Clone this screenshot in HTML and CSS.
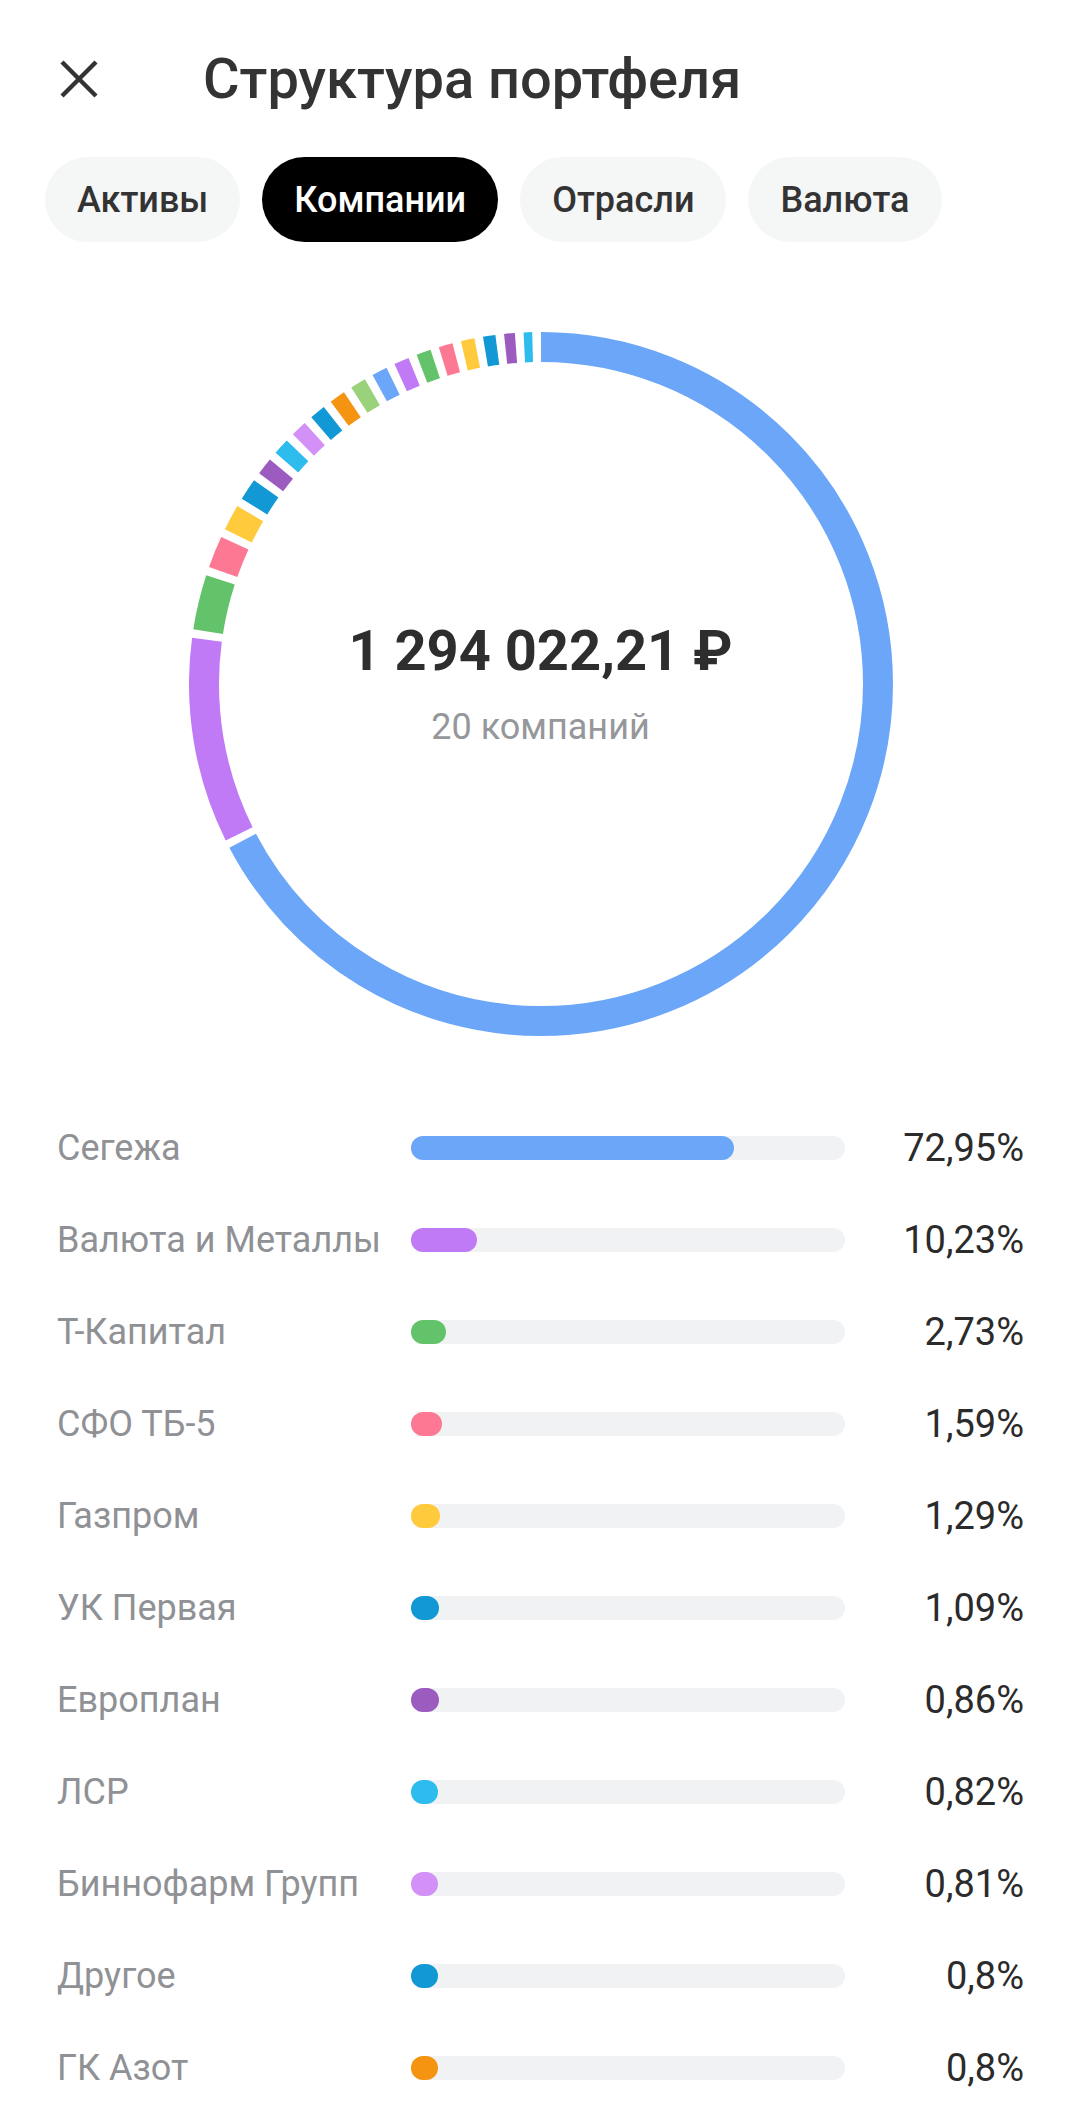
FILE: index.html
```html
<!DOCTYPE html>
<html lang="ru">
<head>
    <meta charset="UTF-8">
    <meta name="viewport" content="width=device-width, initial-scale=1.0">
    <title>Структура портфеля</title>
    <link rel="stylesheet" href="styles.css">
</head>
<body>

    <div class="page">
        <div class="header">
            <button class="close-btn" aria-label="Закрыть">
                <svg viewBox="0 0 40 40" width="40" height="40">
                    <line x1="3" y1="3" x2="37" y2="37" />
                    <line x1="37" y1="3" x2="3" y2="37" />
                </svg>
            </button>
            <h1>Структура портфеля</h1>
        </div>

        <div class="tabs">
            <div class="tab">Активы</div>
            <div class="tab active">Компании</div>
            <div class="tab">Отрасли</div>
            <div class="tab">Валюта</div>
        </div>

        <!-- Donut: circle r=337, circumference 2117.43 -->
        <div class="donut">
            <svg viewBox="0 0 704 704" width="704" height="704">
                <g fill="none" stroke-width="30">
                    <circle cx="352" cy="352" r="337" stroke="#6ca6f8" stroke-dasharray="1424.5 2117.43" transform="rotate(-90 352 352)" />
                    <circle cx="352" cy="352" r="337" stroke="#c07af6" stroke-dasharray="199.75 2117.43" transform="rotate(153.59 352 352)" />
                    <circle cx="352" cy="352" r="337" stroke="#63c36b" stroke-dasharray="53.29 2117.43" transform="rotate(188.95 352 352)" />
                    <circle cx="352" cy="352" r="337" stroke="#fd7893" stroke-dasharray="31.06 2117.43" transform="rotate(199.41 352 352)" />
                    <circle cx="352" cy="352" r="337" stroke="#ffca3b" stroke-dasharray="25.17 2117.43" transform="rotate(206.09 352 352)" />
                    <circle cx="352" cy="352" r="337" stroke="#1298d4" stroke-dasharray="21.29 2117.43" transform="rotate(211.77 352 352)" />
                    <circle cx="352" cy="352" r="337" stroke="#9c5bbf" stroke-dasharray="16.82 2117.43" transform="rotate(216.79 352 352)" />
                    <circle cx="352" cy="352" r="337" stroke="#2ebcef" stroke-dasharray="16.00 2117.43" transform="rotate(221.05 352 352)" />
                    <circle cx="352" cy="352" r="337" stroke="#d390f6" stroke-dasharray="15.82 2117.43" transform="rotate(225.17 352 352)" />
                    <circle cx="352" cy="352" r="337" stroke="#1298d4" stroke-dasharray="15.65 2117.43" transform="rotate(229.26 352 352)" />
                    <circle cx="352" cy="352" r="337" stroke="#f59410" stroke-dasharray="15.65 2117.43" transform="rotate(233.32 352 352)" />
                    <circle cx="352" cy="352" r="337" stroke="#9ad27b" stroke-dasharray="15.41 2117.43" transform="rotate(237.38 352 352)" />
                    <circle cx="352" cy="352" r="337" stroke="#6ca6f8" stroke-dasharray="15.23 2117.43" transform="rotate(241.40 352 352)" />
                    <circle cx="352" cy="352" r="337" stroke="#c07af6" stroke-dasharray="14.82 2117.43" transform="rotate(245.39 352 352)" />
                    <circle cx="352" cy="352" r="337" stroke="#63c36b" stroke-dasharray="14.23 2117.43" transform="rotate(249.31 352 352)" />
                    <circle cx="352" cy="352" r="337" stroke="#fd7893" stroke-dasharray="13.65 2117.43" transform="rotate(253.13 352 352)" />
                    <circle cx="352" cy="352" r="337" stroke="#ffca3b" stroke-dasharray="13.29 2117.43" transform="rotate(256.85 352 352)" />
                    <circle cx="352" cy="352" r="337" stroke="#1298d4" stroke-dasharray="12.12 2117.43" transform="rotate(260.51 352 352)" />
                    <circle cx="352" cy="352" r="337" stroke="#9c5bbf" stroke-dasharray="10.53 2117.43" transform="rotate(263.97 352 352)" />
                    <circle cx="352" cy="352" r="337" stroke="#2ebcef" stroke-dasharray="8.41 2117.43" transform="rotate(267.16 352 352)" />
                </g>
            </svg>
            <div class="donut-center">
                <div class="total">1 294 022,21 ₽</div>
                <div class="count">20 компаний</div>
            </div>
        </div>

        <div class="list">
            <div class="row">
                <span class="name">Сегежа</span>
                <div class="track"><div class="fill blue" style="width: calc(24px + (100% - 24px) * 0.7295)"></div></div>
                <span class="pct">72,95%</span>
            </div>
            <div class="row">
                <span class="name">Валюта и Металлы</span>
                <div class="track"><div class="fill violet" style="width: calc(24px + (100% - 24px) * 0.1023)"></div></div>
                <span class="pct">10,23%</span>
            </div>
            <div class="row">
                <span class="name">Т-Капитал</span>
                <div class="track"><div class="fill green" style="width: calc(24px + (100% - 24px) * 0.0273)"></div></div>
                <span class="pct">2,73%</span>
            </div>
            <div class="row">
                <span class="name">СФО ТБ-5</span>
                <div class="track"><div class="fill pink" style="width: calc(24px + (100% - 24px) * 0.0159)"></div></div>
                <span class="pct">1,59%</span>
            </div>
            <div class="row">
                <span class="name">Газпром</span>
                <div class="track"><div class="fill yellow" style="width: calc(24px + (100% - 24px) * 0.0129)"></div></div>
                <span class="pct">1,29%</span>
            </div>
            <div class="row">
                <span class="name">УК Первая</span>
                <div class="track"><div class="fill darkblue" style="width: calc(24px + (100% - 24px) * 0.0109)"></div></div>
                <span class="pct">1,09%</span>
            </div>
            <div class="row">
                <span class="name">Европлан</span>
                <div class="track"><div class="fill purple" style="width: calc(24px + (100% - 24px) * 0.0086)"></div></div>
                <span class="pct">0,86%</span>
            </div>
            <div class="row">
                <span class="name">ЛСР</span>
                <div class="track"><div class="fill cyan" style="width: calc(24px + (100% - 24px) * 0.0082)"></div></div>
                <span class="pct">0,82%</span>
            </div>
            <div class="row">
                <span class="name">Биннофарм Групп</span>
                <div class="track"><div class="fill lilac" style="width: calc(24px + (100% - 24px) * 0.0081)"></div></div>
                <span class="pct">0,81%</span>
            </div>
            <div class="row">
                <span class="name">Другое</span>
                <div class="track"><div class="fill darkblue" style="width: calc(24px + (100% - 24px) * 0.008)"></div></div>
                <span class="pct">0,8%</span>
            </div>
            <div class="row">
                <span class="name">ГК Азот</span>
                <div class="track"><div class="fill orange" style="width: calc(24px + (100% - 24px) * 0.008)"></div></div>
                <span class="pct">0,8%</span>
            </div>
        </div>
    </div>

</body>
</html>
```

FILE: styles.css
```css
body {
    margin: 0;
    background: #ffffff;
    font-family: Roboto, "Noto Sans", sans-serif;
    color: #333333;
}
.page {
    padding: 0 56px 0 57px;
}

/* header */
.header {
    display: flex;
    align-items: center;
    height: 78px;
    margin-top: 40px;
}
.close-btn {
    width: 40px;
    height: 40px;
    padding: 0;
    margin-left: 2px;
    border: none;
    background: none;
}
.close-btn svg { display: block; }
.close-btn line { stroke: #333333; stroke-width: 4.5; }
h1 {
    margin: 0 0 0 104px;
    font-size: 56px;
    font-weight: 500;
    color: #333333;
}

/* tabs */
.tabs {
    display: flex;
    gap: 22px;
    margin-top: 39px;
    margin-left: -12px;
}
.tab {
    height: 85px;
    padding: 0 32px;
    border-radius: 43px;
    background: #f5f6f6;
    display: flex;
    align-items: center;
    font-size: 36px;
    font-weight: 500;
    color: #333333;
}
.tab.active { background: #000000; color: #ffffff; }

/* donut */
.donut {
    position: relative;
    width: 704px;
    height: 704px;
    margin: 90px auto 0;
}
.donut svg { display: block; }
.donut-center {
    position: absolute;
    inset: 0;
    display: flex;
    flex-direction: column;
    align-items: center;
    justify-content: center;
}
.total {
    font-size: 56px;
    font-weight: 700;
    line-height: 1;
    color: #2e2e2e;
}
.count {
    margin-top: 30px;
    font-size: 36px;
    line-height: 1;
    color: #95979b;
}

/* list */
.list { margin-top: 66px; }
.row {
    display: grid;
    grid-template-columns: 354px 434px 1fr;
    align-items: center;
    height: 92px;
}
.name {
    font-size: 36px;
    color: #8f9195;
}
.pct {
    text-align: right;
    font-size: 38px;
    color: #2b2b2b;
}
.track {
    height: 24px;
    border-radius: 12px;
    background: #f1f2f4;
}
.fill { height: 100%; border-radius: 12px; }
.blue { background: #6ca6f8; }
.violet { background: #c07af6; }
.green { background: #63c36b; }
.pink { background: #fd7893; }
.yellow { background: #ffca3b; }
.darkblue { background: #1298d4; }
.purple { background: #9c5bbf; }
.cyan { background: #2ebcef; }
.lilac { background: #d390f6; }
.orange { background: #f59410; }
```
